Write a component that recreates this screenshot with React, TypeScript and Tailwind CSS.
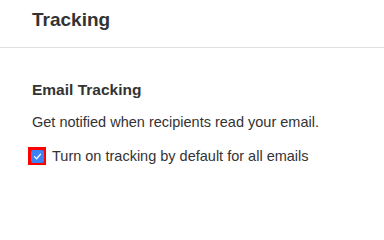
import React, { useState } from 'react';

const App = () => {
  const [checked, setChecked] = useState(true);

  return (
    <div className="w-[384px] h-[212px] bg-white text-[#333333] font-['Liberation_Sans',Arial,sans-serif] overflow-hidden">
      <header className="h-[48px] px-8 pt-[9px] border-b border-[#e0e0e0]">
        <h1 className="text-[19px] font-bold leading-[22px]">Tracking</h1>
      </header>

      <section className="px-8 pt-[32px]">
        <h2 className="text-[15.5px] font-bold leading-[20px]">Email Tracking</h2>
        <p className="mt-[13px] text-[14.5px] leading-[18px]">
          Get notified when recipients read your email.
        </p>
        <label className="mt-[16px] flex items-center gap-[6px] text-[14.5px] leading-[18px] cursor-pointer">
          <span className="ml-[-4px] w-[18px] h-[18px] bg-[#ff0000] flex items-center justify-center shrink-0">
            <span
              className="w-[13px] h-[13px] rounded-[2px] bg-[#3b82f6] flex items-center justify-center"
              onClick={() => setChecked(!checked)}
            >
              {checked && (
                <svg viewBox="0 0 12 12" className="w-[9px] h-[9px]" fill="none">
                  <path d="M2 6.2 L4.8 9 L10 3" stroke="white" strokeWidth="1.6" strokeLinecap="round" strokeLinejoin="round" />
                </svg>
              )}
            </span>
          </span>
          <span>Turn on tracking by default for all emails</span>
        </label>
      </section>
    </div>
  );
};

export default App;
